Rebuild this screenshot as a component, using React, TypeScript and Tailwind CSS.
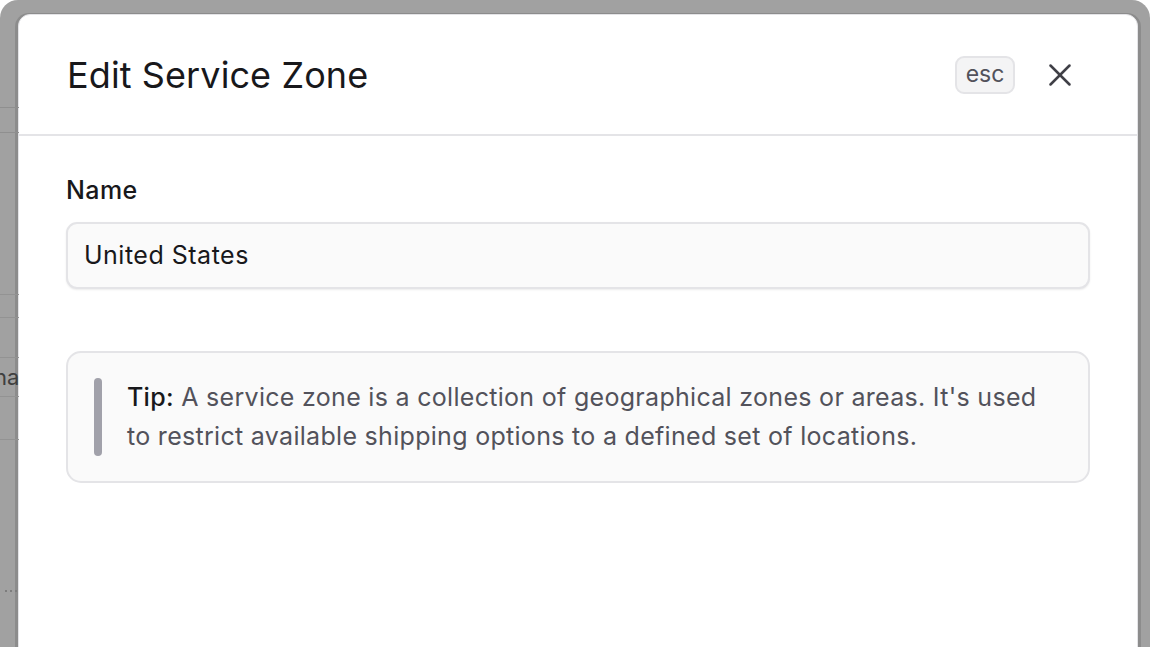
import { X } from "lucide-react"

function BackdropStrip() {
  // faint rows of the page behind the overlay
  return (
    <div className="relative h-full w-[19px] shrink-0 overflow-hidden">
      <div className="h-[94px]" />
      <div className="h-px bg-[#8f8f8f]" />
      <div className="h-[24px]" />
      <div className="h-px bg-[#8f8f8f]" />
      <div className="h-[161px]" />
      <div className="h-px bg-[#939393]" />
      <div className="h-[22px]" />
      <div className="h-px bg-[#939393]" />
      <div className="h-[39px]" />
      <div className="h-px bg-[#939393]" />
      <div className="flex h-[38px] items-center overflow-hidden text-[22px] leading-none text-[#3f3f3f]">
        <span className="-ml-[6px]">na</span>
      </div>
      <div className="h-px bg-[#939393]" />
      <div className="h-[42px]" />
      <div className="h-px bg-[#939393]" />
      <div className="h-[150px]" />
      <div className="flex gap-[3px] pl-[5px]">
        <span className="h-[2px] w-[2px] bg-[#7d7d7d]" />
        <span className="h-[2px] w-[2px] bg-[#7d7d7d]" />
        <span className="h-[2px] w-[2px] bg-[#7d7d7d]" />
      </div>
      <div className="absolute left-[0px] top-[634px] h-[20px] w-[20px] rounded-full border-[3px] border-[#2f5fbd] border-b-transparent border-r-transparent" />
    </div>
  )
}

export default function App() {
  return (
    <div
      className="h-[647px] w-full overflow-hidden bg-white"
      style={{ fontFamily: "Inter, 'Noto Sans', sans-serif" }}
    >
      <div className="flex h-full w-full rounded-t-[18px] bg-[#a1a1a1] pt-[13px]">
        <div className="flex h-full">
          <BackdropStrip />
        </div>
        <div className="-ml-[4px] flex-1 rounded-t-[14px] bg-[#8c8c8c] pl-[3px] pr-[3px] pt-px">
          <div className="h-[700px] rounded-t-[12px] border border-[#e4e4e7] bg-white">
            <div className="flex h-[121px] items-center justify-between border-b-2 border-[#e4e4e7] pl-[48px] pr-[58px]">
              <h1 className="text-[36px] font-normal tracking-[0.1px] text-[#18181b]">
                Edit Service Zone
              </h1>
              <div className="flex items-center gap-[26px]">
                <kbd
                  className="flex h-[38px] w-[60px] items-center justify-center rounded-[9px] border-2 border-[#e4e4e7] bg-[#f4f4f5] text-[23px] text-[#52525b]"
                  style={{ fontFamily: "Inter, sans-serif" }}
                >
                  esc
                </kbd>
                <X className="h-[38px] w-[38px] text-[#3f3f46]" strokeWidth={1.6} />
              </div>
            </div>
            <div className="px-[47px] pt-[38px]">
              <label className="block text-[25px] font-medium leading-[32px] tracking-[0.4px] text-[#18181b]">
                Name
              </label>
              <div className="mt-[16px] flex h-[67px] items-center rounded-[11px] border-2 border-[#e4e4e7] bg-[#fafafa] px-[16px] text-[25px] tracking-[0.5px] text-[#18181b] shadow-[0_1px_2px_rgba(0,0,0,0.08)]">
                United States
              </div>
              <div className="mt-[62px] flex gap-[25px] rounded-[15px] border-2 border-[#e4e4e7] bg-[#fafafa] py-[25px] pl-[26px] pr-[40px]">
                <div className="w-[8px] shrink-0 rounded-full bg-[#a1a1aa]" />
                <p className="text-[25px] leading-[39px] tracking-[0.3px] text-[#52525b]">
                  <span className="font-medium text-[#18181b]">Tip:</span> A service zone is a collection of
                  geographical zones or areas. It's used to restrict available shipping options to a defined set of
                  locations.
                </p>
              </div>
            </div>
          </div>
        </div>
        <div className="w-[9px] shrink-0" />
      </div>
    </div>
  )
}
